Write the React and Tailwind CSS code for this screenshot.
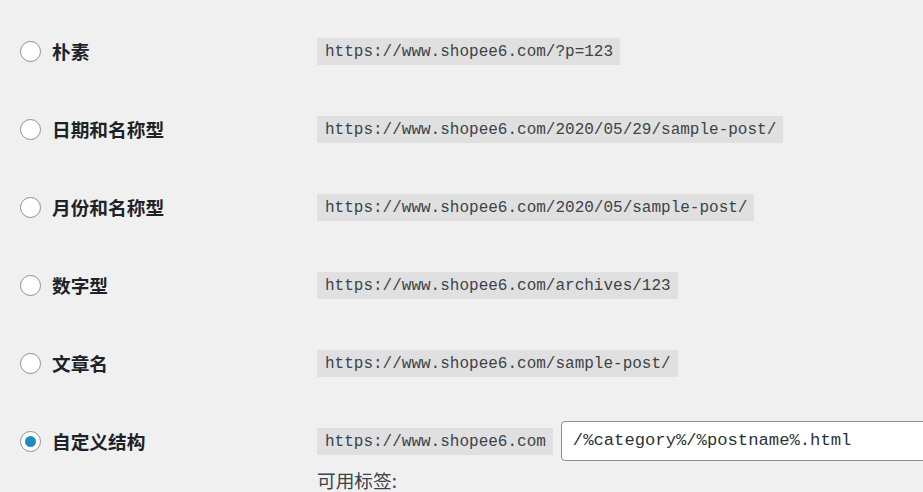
import React from 'react';

// Permalink structure options
const OPTIONS = [
  { label: '朴素', url: 'https://www.shopee6.com/?p=123' },
  { label: '日期和名称型', url: 'https://www.shopee6.com/2020/05/29/sample-post/' },
  { label: '月份和名称型', url: 'https://www.shopee6.com/2020/05/sample-post/' },
  { label: '数字型', url: 'https://www.shopee6.com/archives/123' },
  { label: '文章名', url: 'https://www.shopee6.com/sample-post/' },
];

const CJK = { fontFamily: '"Noto Sans CJK SC", "Noto Sans", sans-serif' };
const MONO = { fontFamily: '"Liberation Mono", "DejaVu Sans Mono", monospace' };

const Radio = ({ checked }) => (
  <span className="w-[21px] h-[21px] shrink-0 rounded-full border border-[#8c8f94] bg-white flex items-center justify-center">
    {checked && <span className="w-[11px] h-[11px] rounded-full bg-[#1e8cbe]" />}
  </span>
);

const Label = ({ checked, children }) => (
  <div className="w-[317px] shrink-0 flex items-center pl-5">
    <Radio checked={checked} />
    <span className="ml-[11px] text-[18.7px] font-bold text-[#1d2327] leading-none" style={CJK}>
      {children}
    </span>
  </div>
);

const Code = ({ children }) => (
  <code
    className="bg-[#e0e0e0] text-[#3c434a] text-[16px] leading-[22px] pt-[3px] pb-[2px] pl-[8px] pr-[7px] whitespace-nowrap"
    style={MONO}
  >
    {children}
  </code>
);

export default function App() {
  return (
    <div className="w-[923px] h-[492px] bg-[#f0f0f1] overflow-hidden pt-3">
      {OPTIONS.map((opt) => (
        <div key={opt.label} className="h-[78px] flex items-center">
          <Label>{opt.label}</Label>
          <Code>{opt.url}</Code>
        </div>
      ))}

      {/* Custom structure row */}
      <div className="flex pt-[19px]">
        <div className="h-[40px] flex items-center">
          <Label checked>自定义结构</Label>
        </div>
        <div className="flex flex-col">
          <div className="flex items-center h-[40px]">
            <Code>https://www.shopee6.com</Code>
            <div
              className="ml-2 w-[420px] h-[40px] shrink-0 bg-white border border-[#8c8f94] rounded-[4px] pl-[11px] flex items-center text-[17.2px] text-[#2c3338]"
              style={MONO}
            >
              /%category%/%postname%.html
            </div>
          </div>
          <div className="mt-[5px] text-[18.7px] leading-[28px] text-[#3c434a]" style={CJK}>
            可用标签:
          </div>
        </div>
      </div>
    </div>
  );
}
